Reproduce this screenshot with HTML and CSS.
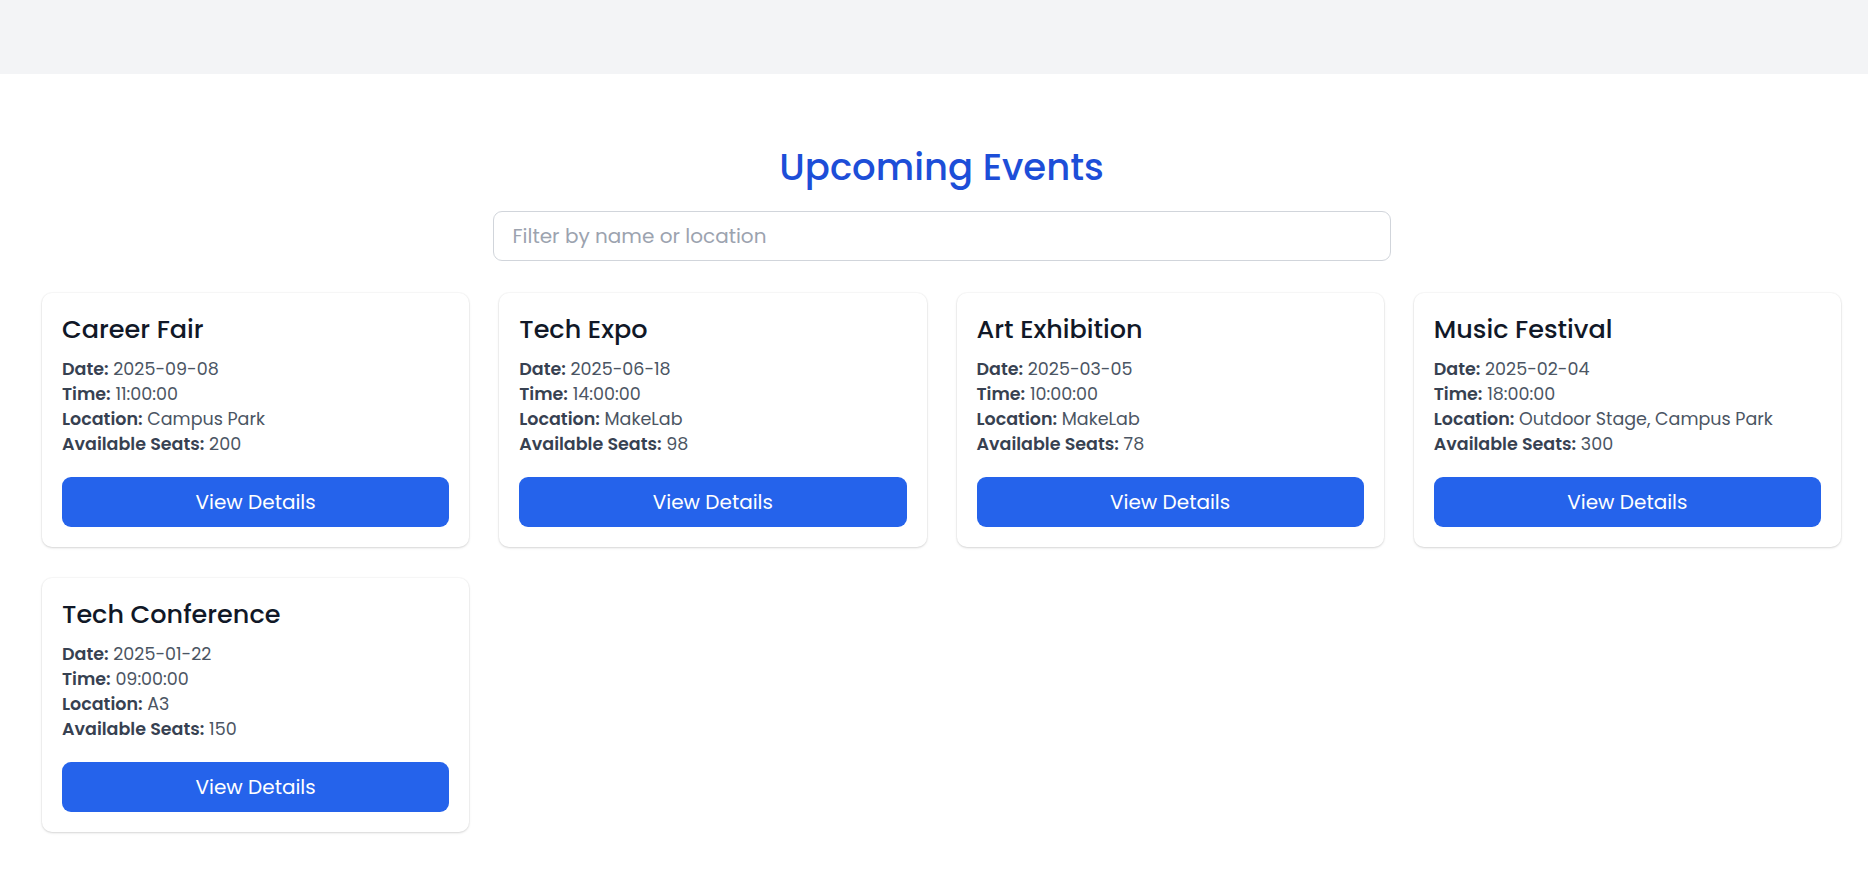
FILE: index.html
```html
<!DOCTYPE html>
<html lang="en">
<head>
<meta charset="utf-8">
<title>Upcoming Events</title>
<link rel="stylesheet" href="styles.css">
</head>
<body>
<header class="topbar"></header>
<main class="page">
  <h1 class="page-title">Upcoming Events</h1>
  <div class="filter-wrap">
    <input class="filter" type="text" placeholder="Filter by name or location">
  </div>
  <section class="grid">
    <article class="card">
      <h2 class="card-title">Career Fair</h2>
      <div class="info">
        <p><strong>Date:</strong> 2025-09-08</p>
        <p><strong>Time:</strong> 11:00:00</p>
        <p><strong>Location:</strong> Campus Park</p>
        <p><strong>Available Seats:</strong> 200</p>
      </div>
      <button class="btn">View Details</button>
    </article>
    <article class="card">
      <h2 class="card-title">Tech Expo</h2>
      <div class="info">
        <p><strong>Date:</strong> 2025-06-18</p>
        <p><strong>Time:</strong> 14:00:00</p>
        <p><strong>Location:</strong> MakeLab</p>
        <p><strong>Available Seats:</strong> 98</p>
      </div>
      <button class="btn">View Details</button>
    </article>
    <article class="card">
      <h2 class="card-title">Art Exhibition</h2>
      <div class="info">
        <p><strong>Date:</strong> 2025-03-05</p>
        <p><strong>Time:</strong> 10:00:00</p>
        <p><strong>Location:</strong> MakeLab</p>
        <p><strong>Available Seats:</strong> 78</p>
      </div>
      <button class="btn">View Details</button>
    </article>
    <article class="card">
      <h2 class="card-title">Music Festival</h2>
      <div class="info">
        <p><strong>Date:</strong> 2025-02-04</p>
        <p><strong>Time:</strong> 18:00:00</p>
        <p><strong>Location:</strong> Outdoor Stage, Campus Park</p>
        <p><strong>Available Seats:</strong> 300</p>
      </div>
      <button class="btn">View Details</button>
    </article>
    <article class="card">
      <h2 class="card-title">Tech Conference</h2>
      <div class="info">
        <p><strong>Date:</strong> 2025-01-22</p>
        <p><strong>Time:</strong> 09:00:00</p>
        <p><strong>Location:</strong> A3</p>
        <p><strong>Available Seats:</strong> 150</p>
      </div>
      <button class="btn">View Details</button>
    </article>
  </section>
</main>
</body>
</html>
```
FILE: styles.css
```css
* { box-sizing: border-box; }
html, body { margin: 0; padding: 0; background: #ffffff; }
body {
  font-family: "Poppins", "Open Sans", "Liberation Sans", sans-serif;
  color: #1f2937;
}
.topbar {
  height: 74px;
  background: #f3f4f6;
}
.page {
  padding: 71px 27px 40px 42px;
}
.page-title {
  margin: 0;
  text-align: center;
  font-size: 37px;
  line-height: 44px;
  font-weight: 500;
  color: #1d4ed8;
}
.filter-wrap {
  display: flex;
  justify-content: center;
  margin-top: 22px;
}
.filter {
  width: 898px;
  height: 50px;
  border: 1px solid #d1d5db;
  border-radius: 9px;
  padding: 0 19px;
  font-family: inherit;
  font-size: 20px;
  color: #374151;
  outline: none;
  background: #fff;
}
.filter::placeholder { color: #9ca3af; }
.grid {
  margin-top: 32px;
  display: grid;
  grid-template-columns: repeat(4, 1fr);
  column-gap: 30px;
  row-gap: 31px;
}
.card {
  background: #fff;
  border-radius: 10px;
  padding: 20px;
  box-shadow: 0 0 0 1px rgba(0,0,0,0.025), 0 1px 3px rgba(0,0,0,0.1), 0 1px 2px rgba(0,0,0,0.05);
}
.card-title {
  margin: 0 0 12px;
  font-size: 25.5px;
  line-height: 32px;
  font-weight: 500;
  color: #111827;
}
.info p {
  margin: 0;
  font-size: 17.5px;
  line-height: 25px;
  color: #4b5563;
}
.info strong {
  font-weight: 600;
  color: #374151;
}
.btn {
  display: block;
  width: 100%;
  height: 50px;
  margin-top: 20px;
  border: none;
  border-radius: 9px;
  background: #2563eb;
  color: #fff;
  font-family: inherit;
  font-size: 20px;
  cursor: pointer;
}
```
